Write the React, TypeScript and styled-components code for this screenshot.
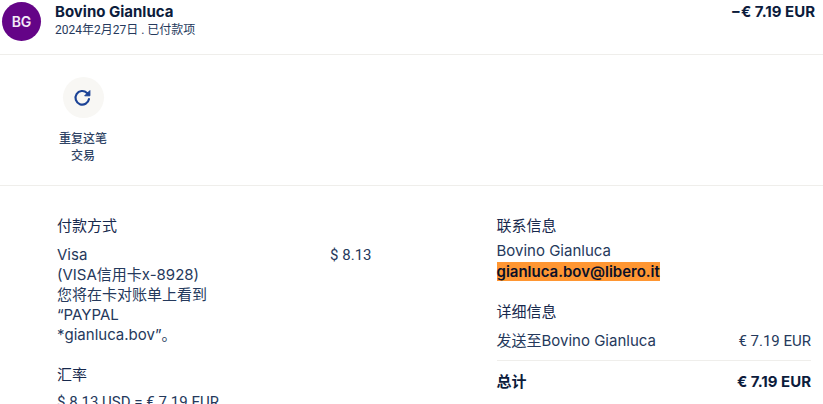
import React from "react";
import styled, { createGlobalStyle } from "styled-components";

const GlobalStyle = createGlobalStyle`
  *, *::before, *::after { box-sizing: border-box; }
  html { scrollbar-width: none; }
  body {
    margin: 0;
    background: #fff;
    color: #25395c;
    font-family: Inter, "Noto Sans CJK SC", sans-serif;
    font-size: 15px;
    line-height: 20px;
  }
  h2, p, dl, dt, dd { margin: 0; }
`;

const Header = styled.header`
  display: flex;
  align-items: flex-start;
  gap: 14px;
  padding: 2px 8px 13px 2px;
  border-bottom: 1px solid #efeeeb;
`;

const Avatar = styled.div`
  display: flex;
  align-items: center;
  justify-content: center;
  flex: none;
  width: 39px;
  height: 39px;
  border-radius: 50%;
  background: #640487;
  color: #f3e9f7;
  font-weight: 600;
  font-size: 14px;
`;

const Identity = styled.div`
  flex: 1;
`;

const Name = styled.p`
  color: #0c1c3c;
  font-weight: 700;
`;

const Meta = styled.p`
  font-family: Roboto, "Noto Sans CJK SC", sans-serif;
  font-size: 12px;
  line-height: 16px;
`;

const Actions = styled.section`
  display: flex;
  padding: 22px 53px 21px;
  border-bottom: 1px solid #efeeeb;
`;

const ActionButton = styled.button`
  display: flex;
  flex-direction: column;
  align-items: center;
  gap: 12px;
  width: 60px;
  padding: 0;
  border: 0;
  background: none;
  color: #2f4365;
  font: inherit;
  font-size: 12px;
  font-weight: 500;
  line-height: 17px;
  cursor: pointer;
`;

const IconDisc = styled.span`
  display: flex;
  align-items: center;
  justify-content: center;
  width: 41px;
  height: 41px;
  border-radius: 50%;
  background: #f8f7f4;
`;

const Details = styled.main`
  display: grid;
  grid-template-columns: 1fr 1fr;
  gap: 125px;
  padding: 30px 12px 0 57px;
`;

const Column = styled.div`
  display: flex;
  flex-direction: column;
  gap: 20px;
`;

const Group = styled.section<{ $gap: number }>`
  display: flex;
  flex-direction: column;
  gap: ${(p) => p.$gap}px;
`;

const Heading = styled.h2`
  color: #17294d;
  font-size: 15px;
  font-weight: 400;
`;

const Contact = styled.div`
  display: flex;
  flex-direction: column;
  gap: 1px;
`;

const Row = styled.div`
  display: flex;
  justify-content: space-between;
`;

const Total = styled(Row)`
  margin-top: 9px;
  padding-top: 11px;
  border-top: 1px solid #efeeeb;
  color: #0c1c3c;
  font-weight: 700;
`;

const Amount = styled.dd`
  flex: none;
  font-family: Roboto, sans-serif;
`;

const StrongAmount = styled.dd`
  flex: none;
  color: #0c1c3c;
  font-weight: 700;
`;

const Rate = styled.p`
  font-family: Roboto, sans-serif;
`;

const Email = styled.mark`
  background: #ff9632;
  color: #0a1028;
  font-weight: 600;
`;

const RepeatIcon = () => (
  <svg width="20" height="20" viewBox="0 0 20 20" fill="none" aria-hidden="true">
    <path d="M16 11a6.8 6.8 0 1 1-2-6.1l1.6 1.4" stroke="#1c4396" strokeWidth="2.1" strokeLinecap="round" />
    <path d="M16.9 2.6v5.2h-5.2z" fill="#1c4396" stroke="#1c4396" strokeWidth="1" strokeLinejoin="round" />
  </svg>
);

export default function App() {
  return (
    <>
      <GlobalStyle />
      <Header>
        <Avatar>BG</Avatar>
        <Identity>
          <Name>Bovino Gianluca</Name>
          <Meta>2024年2月27日 . 已付款项</Meta>
        </Identity>
        <StrongAmount as="p">−€ 7.19 EUR</StrongAmount>
      </Header>
      <Actions>
        <ActionButton type="button">
          <IconDisc><RepeatIcon /></IconDisc>
          <span>重复这笔<br />交易</span>
        </ActionButton>
      </Actions>
      <Details>
        <Column>
          <Group $gap={9}>
            <Heading>付款方式</Heading>
            <dl>
              <Row>
                <dt>
                  Visa<br />
                  (VISA信用卡x-8928)<br />
                  您将在卡对账单上看到<br />
                  “PAYPAL<br />
                  *gianluca.bov”。
                </dt>
                <Amount>$ 8.13</Amount>
              </Row>
            </dl>
          </Group>
          <Group $gap={7}>
            <Heading>汇率</Heading>
            <Rate>$ 8.13 USD = € 7.19 EUR</Rate>
          </Group>
        </Column>
        <Column>
          <Group $gap={5}>
            <Heading>联系信息</Heading>
            <Contact>
              <p>Bovino Gianluca</p>
              <p><Email>gianluca.bov@libero.it</Email></p>
            </Contact>
          </Group>
          <Group $gap={9}>
            <Heading>详细信息</Heading>
            <dl>
              <Row>
                <dt>发送至Bovino Gianluca</dt>
                <Amount>€ 7.19 EUR</Amount>
              </Row>
              <Total>
                <dt>总计</dt>
                <StrongAmount>€ 7.19 EUR</StrongAmount>
              </Total>
            </dl>
          </Group>
        </Column>
      </Details>
    </>
  );
}
